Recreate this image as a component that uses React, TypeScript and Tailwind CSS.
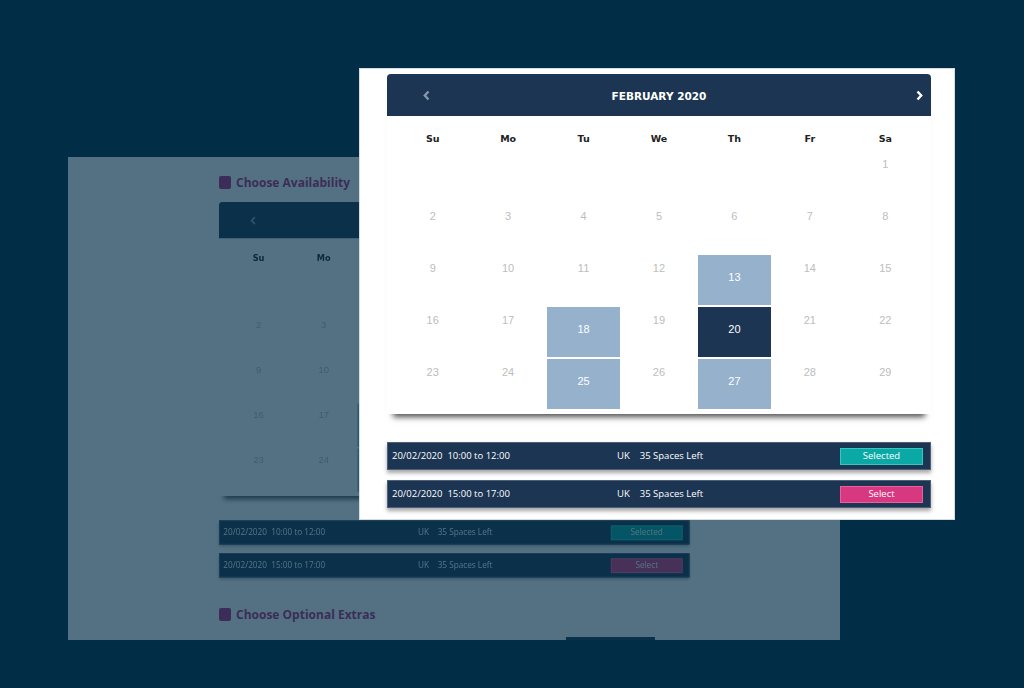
const dayNames = ["Su", "Mo", "Tu", "We", "Th", "Fr", "Sa"];

// Feb 2020 starts on a Saturday
const cells: (number | null)[] = [
  ...Array(6).fill(null),
  ...Array.from({ length: 29 }, (_, i) => i + 1),
];

const available = [13, 18, 25, 27];
const picked = 20;

const slots = [
  { date: "20/02/2020", time: "10:00 to 12:00", selected: true },
  { date: "20/02/2020", time: "15:00 to 17:00", selected: false },
];

function Chevron({ dir, className }: { dir: "left" | "right"; className: string }) {
  return (
    <svg width="7" height="11" viewBox="0 0 7 11" className={className}>
      <path
        d={dir === "left" ? "M5.5 1.5 L1.8 5.5 L5.5 9.5" : "M1.5 1.5 L5.2 5.5 L1.5 9.5"}
        fill="none"
        stroke="currentColor"
        strokeWidth="2.4"
      />
    </svg>
  );
}

function BookingWidget() {
  return (
    <div className="w-[544px]">
      {/* Calendar */}
      <div className="pb-[4px] shadow-[0_9px_6px_-6px_rgba(0,0,0,0.7)]">
        <div className="grid h-[42px] grid-cols-[1fr_auto_1fr] items-center rounded-t-[4px] bg-[#1c3553]">
          <Chevron dir="left" className="ml-[36px] mt-[1px] justify-self-start text-[#8796a8]" />
          <span className="pt-[3px] font-['DejaVu_Sans',sans-serif] text-[10.5px] font-bold text-white">
            FEBRUARY 2020
          </span>
          <Chevron dir="right" className="mr-[8px] mt-[1px] justify-self-end text-white" />
        </div>

        <div className="grid h-[34px] grid-cols-7 px-[8px] pt-[16px]">
          {dayNames.map((d) => (
            <span
              key={d}
              className="text-center font-['DejaVu_Sans',sans-serif] text-[9.5px] leading-[13px] font-bold text-[#222]"
            >
              {d}
            </span>
          ))}
        </div>

        <div className="grid grid-cols-7 px-[8px] font-['Liberation_Sans',sans-serif] text-[11px] leading-[14px]">
          {cells.map((n, i) => {
            if (n === null) return <div key={i} className="h-[52px]" />;
            const isPicked = n === picked;
            const isOpen = available.includes(n);
            return (
              <div key={i} className="h-[52px] p-[1px]">
                {isPicked || isOpen ? (
                  <div
                    className={`h-[50px] pt-[15px] text-center text-white ${
                      isPicked ? "bg-[#1c3553]" : "bg-[#95b1cc]"
                    }`}
                  >
                    {n}
                  </div>
                ) : (
                  <div className="h-[50px] pt-[6px] text-center text-[#bdbdbd]">{n}</div>
                )}
              </div>
            );
          })}
        </div>
      </div>

      {/* Time slots */}
      <div className="mt-[28px] flex flex-col gap-[10px]">
        {slots.map((s) => (
          <div
            key={s.time}
            className="flex h-[28px] items-center border border-[#4d6078] bg-[#1c3553] pl-[4px] pr-[7px] font-['Open_Sans',sans-serif] text-[9.5px] text-white shadow-[0_3px_4px_rgba(0,0,0,0.35)]"
          >
            <span className="w-[225px] whitespace-pre">{s.date}  {s.time}</span>
            <span>UK</span>
            <span className="ml-[10px]">35 Spaces Left</span>
            <button
              className={`ml-auto h-[17px] w-[83px] border text-[9.5px] text-white ${
                s.selected ? "border-[#3cc4c1] bg-[#0aa9a6]" : "border-[#e8609c] bg-[#d8387f]"
              }`}
            >
              {s.selected ? "Selected" : "Select"}
            </button>
          </div>
        ))}
      </div>
    </div>
  );
}

function SectionHeading({ label }: { label: string }) {
  return (
    <div className="flex h-[13px] items-center gap-[5px]">
      <span className="h-[13px] w-[12px] rounded-[2px] bg-[#b82c7c]" />
      <span className="font-['Open_Sans',sans-serif] text-[12px] font-bold text-[#b82c7c]">
        {label}
      </span>
    </div>
  );
}

export default function App() {
  return (
    <div className="relative h-[688px] w-[1024px] overflow-hidden bg-[#022d47]">
      {/* Dimmed page behind */}
      <div className="pl-[68px] pt-[157px]">
        <div className="relative h-[483px] w-[772px] bg-white pl-[151px] pt-[19px]">
          <SectionHeading label="Choose Availability" />
          <div className="mt-[13px] h-[375px] w-[471px]">
            <div className="w-[544px] origin-top-left scale-[0.865]">
              <BookingWidget />
            </div>
          </div>
          <div className="mt-[31px]">
            <SectionHeading label="Choose Optional Extras" />
          </div>
          <div className="ml-[347px] mt-[16px] h-[3px] w-[89px] bg-[#1c3553]" />
          <div className="absolute inset-0 bg-[rgba(2,45,71,0.68)]" />
        </div>
      </div>

      {/* Zoomed card */}
      <div className="absolute left-[359px] top-[68px] h-[452px] w-[596px] border border-[#d5dde4] bg-white pl-[27px] pt-[5px]">
        <BookingWidget />
      </div>
    </div>
  );
}
